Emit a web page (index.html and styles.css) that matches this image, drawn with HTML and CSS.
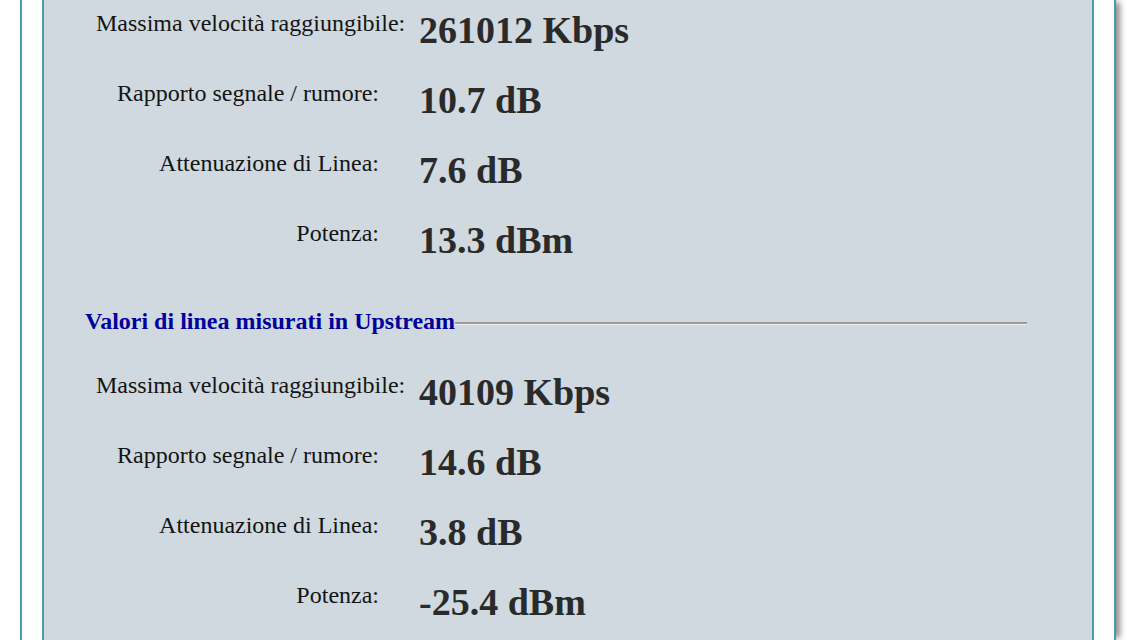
FILE: index.html
```html
<!DOCTYPE html>
<html lang="it">
<head>
<meta charset="utf-8">
<title>Valori di linea</title>
<link rel="stylesheet" href="styles.css">
</head>
<body>
<div class="frame">
  <div class="panel">
    <div class="section">
      <div class="row"><div class="label">Massima velocità raggiungibile:</div><div class="value">261012 Kbps</div></div>
      <div class="row"><div class="label">Rapporto segnale / rumore:</div><div class="value">10.7 dB</div></div>
      <div class="row"><div class="label">Attenuazione di Linea:</div><div class="value">7.6 dB</div></div>
      <div class="row"><div class="label">Potenza:</div><div class="value">13.3 dBm</div></div>
    </div>
    <div class="section">
      <div class="heading"><span class="heading-text">Valori di linea misurati in Upstream</span><span class="rule"></span></div>
      <div class="row"><div class="label">Massima velocità raggiungibile:</div><div class="value">40109 Kbps</div></div>
      <div class="row"><div class="label">Rapporto segnale / rumore:</div><div class="value">14.6 dB</div></div>
      <div class="row"><div class="label">Attenuazione di Linea:</div><div class="value">3.8 dB</div></div>
      <div class="row"><div class="label">Potenza:</div><div class="value">-25.4 dBm</div></div>
    </div>
  </div>
</div>
</body>
</html>
```

FILE: styles.css
```css
html, body {
  margin: 0;
  padding: 0;
  background: #ffffff;
  overflow: hidden;
}

body {
  font-family: "Liberation Serif", "Times New Roman", serif;
  height: 640px;
}

.frame {
  margin-left: 20px;
  width: 1096px;
  height: 640px;
  border-left: 2px solid #4b99ab;
  border-right: 2px solid #4b99ab;
  padding: 0 20px;
  box-sizing: border-box;
  box-shadow: 6px 0 6px -2px rgba(0, 0, 0, 0.45);
  background: #ffffff;
}

.panel {
  height: 100%;
  background: #cfd9df;
  border-left: 2px solid #4b99ab;
  border-right: 2px solid #4b99ab;
  padding-top: 10px;
  box-sizing: border-box;
  overflow: hidden;
}

.row {
  display: flex;
  align-items: flex-start;
  height: 70px;
  padding-left: 52px;
}

.label {
  width: 283px;
  flex: none;
  text-align: right;
  font-size: 24px;
  line-height: 28px;
  margin-top: -1px;
  color: #141414;
  white-space: nowrap;
}

.value {
  margin-left: 40px;
  margin-top: -2px;
  font-size: 38px;
  line-height: 44px;
  font-weight: bold;
  color: #2a2a2a;
  white-space: nowrap;
}

.heading {
  height: 82px;
  display: flex;
  align-items: flex-start;
  padding-left: 41px;
  padding-right: 65px;
  padding-top: 17px;
  box-sizing: border-box;
}

.heading-text {
  font-size: 24px;
  line-height: 28px;
  font-weight: bold;
  color: #00009c;
  white-space: nowrap;
}

.rule {
  flex: 1;
  height: 0;
  margin-top: 15px;
  border-top: 2px solid #9a9a9a;
  border-bottom: 1px solid #eef0f0;
}
```
